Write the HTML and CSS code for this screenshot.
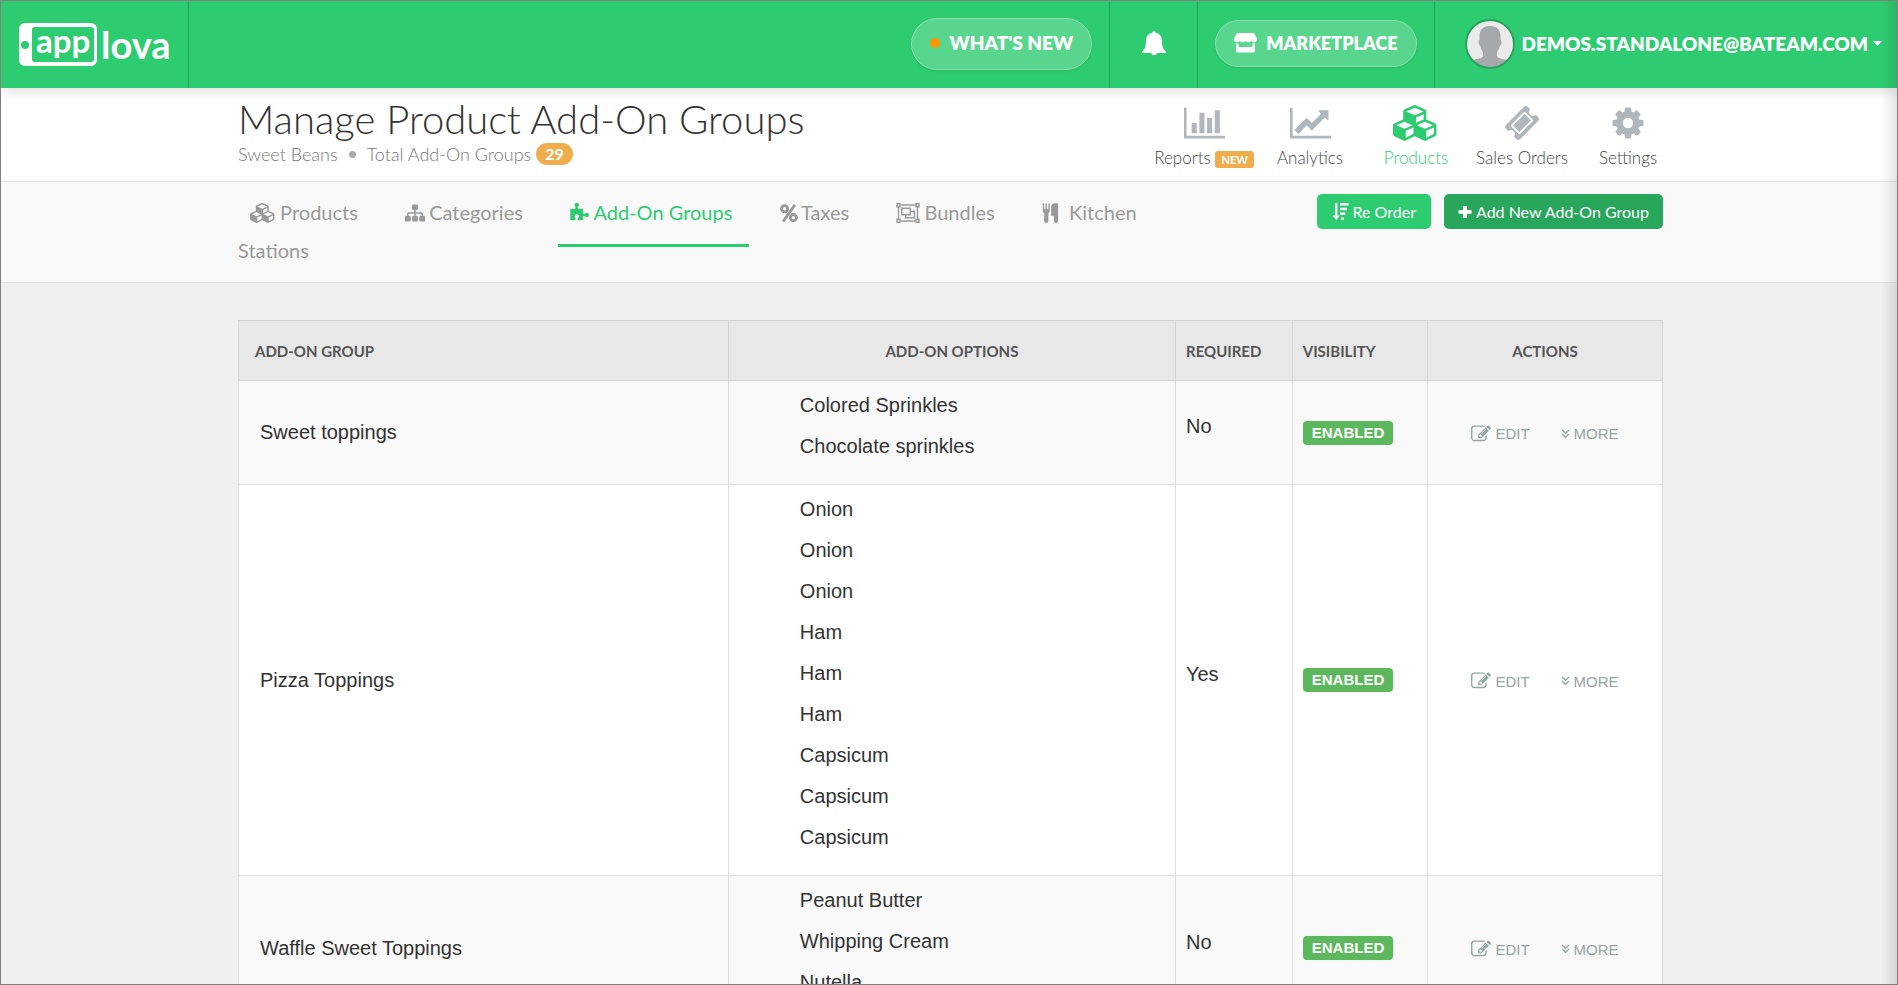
FILE: index.html
```html
<!DOCTYPE html>
<html lang="en">
<head>
<meta charset="utf-8">
<title>Manage Product Add-On Groups</title>
<link rel="stylesheet" href="styles.css">
</head>
<body>
<svg class="sprite" aria-hidden="true">
  <symbol id="i-cubes" viewBox="0 0 2304 1792"><path d="M640 1632l384-192v-314l-384 164v342zm-64-454l404-173-404-173-404 173zm1088 454l384-192v-314l-384 164v342zm-64-454l404-173-404-173-404 173zm-448-293l384-165v-266l-384 164v267zm-64-379l441-189-441-189-441 189zm1088 518v416q0 36-19 67t-52 47l-448 224q-25 14-57 14t-57-14l-448-224q-5-2-7-4-2 2-7 4l-448 224q-25 14-57 14t-57-14l-448-224q-33-16-52-47t-19-67v-416q0-38 21.500-70t56.500-48l434-186v-400q0-38 21.500-70t56.500-48l448-192q23-10 50-10t50 10l448 192q35 16 56.500 48t21.500 70v400l434 186q36 16 57 48t21 70z"/></symbol>
  <symbol id="i-edit" viewBox="0 0 1792 1792"><path d="M888 1184l116-116-152-152-116 116v56h96v96h56zm440-720q-16-16-33 1l-350 350q-17 17-1 33t33-1l350-350q17-17 1-33zm80 594v190q0 119-84.500 203.500t-203.500 84.500h-832q-119 0-203.500-84.500t-84.500-203.500v-832q0-119 84.500-203.500t203.500-84.500h832q63 0 117 25 15 7 18 23 3 17-9 29l-49 49q-14 14-32 8-23-6-45-6h-832q-66 0-113 47t-47 113v832q0 66 47 113t113 47h832q66 0 113-47t47-113v-126q0-13 9-22l64-64q15-15 35-7t20 29zm-96-738l288 288-672 672h-288v-288zm444 132l-92 92-288-288 92-92q28-28 68-28t68 28l152 152q28 28 28 68t-28 68z"/></symbol>
  <symbol id="i-down" viewBox="0 0 9 10"><path d="M1 1l3.500 3.300L8 1M1 5l3.500 3.300L8 5" fill="none" stroke="currentColor" stroke-width="1.400"/></symbol>
</svg>

<header class="topbar">
  <a class="topbar__logo" href="#" aria-label="applova">
    <svg width="156" height="46" viewBox="0 0 156 46">
      <path fill="#fff" fill-rule="evenodd" d="M6 1h66a6 6 0 0 1 6 6v31a6 6 0 0 1-6 6H6a6 6 0 0 1-6-6V7a6 6 0 0 1 6-6zM16 5a3 3 0 0 0-3 3v29a3 3 0 0 0 3 3h56a3 3 0 0 0 3-3V8a3 3 0 0 0-3-3zM6 19a4 4 0 1 0 0 8a4 4 0 0 0 0-8z"/>
      <text class="logo-text logo-text--app" x="17" y="31">app</text>
      <text class="logo-text logo-text--lova" x="82" y="37">lova</text>
    </svg>
  </a>
  <div class="topbar__cell topbar__cell--first">
    <button class="pill pill--news" type="button"><span class="pill__dot"></span>WHAT'S NEW</button>
  </div>
  <button class="topbar__cell topbar__bell" type="button" aria-label="Notifications">
    <svg width="24" height="26" viewBox="0 0 24 26"><path fill="#fff" d="M12 0c1 0 1.600.7 1.600 1.800C18 2.700 20 6 20 10c0 6 1.500 8.500 3.700 10.500.7.800.2 1.500-.7 1.500h-8a3.200 3.600 0 0 1-6 0H1c-.9 0-1.400-.7-.7-1.500C2.500 18.500 4 16 4 10c0-4 2-7.300 6.400-8.200C10.400.7 11 0 12 0z"/></svg>
  </button>
  <div class="topbar__cell">
    <button class="pill pill--market" type="button">
      <svg width="23" height="20" viewBox="0 0 23 20"><path fill="#fff" d="M4 0h15c.6 0 1 .2 1.300.7L23 5.500c.3 2-1 3.700-2.800 3.700-1.200 0-2-.5-2.900-1.500-.8 1-1.700 1.500-2.900 1.500s-2.100-.5-2.900-1.500c-.8 1-1.700 1.500-2.900 1.500s-2.100-.5-2.900-1.500c-.9 1-1.700 1.500-2.900 1.500C1 9.200-.3 7.500 0 5.500L2.700.7C3 .2 3.400 0 4 0zM2 10.300c1.200.3 1.800.2 2.500-.1V14h14v-3.800c.9.300 1.700.4 2.500.1V18.500a1 1 0 0 1-1 1H3a1 1 0 0 1-1-1z"/></svg>
      MARKETPLACE</button>
  </div>
  <button class="topbar__cell topbar__user" type="button">
    <svg width="50" height="50" viewBox="0 0 50 50"><circle cx="25" cy="25" r="24" fill="#ebebeb"/><path fill="#a5a9ac" d="M25 7c7 0 10.500 4 10.500 10v4c1.500.2 1.200 5.500-.8 6-.5 3-1.500 4.500-2.700 6v4c1 3 7 3 11.500 4.500A24 24 0 0 1 6.500 41C11 40 17 40 18 37v-4c-1.200-1.500-2.200-3-2.700-6-2-.5-2.300-5.800-.8-6v-4C14.500 11 18 7 25 7z"/><circle cx="25" cy="25" r="24" fill="none" stroke="#27a35c" stroke-width="2"/></svg>
    <span>DEMOS.STANDALONE@BATEAM.COM</span>
    <svg width="9" height="5" viewBox="0 0 9 5"><path fill="#fff" d="M0 0h9L4.500 5z"/></svg>
  </button>
</header>

<section class="pagehead">
  <div>
    <h1 class="pagehead__title">Manage Product Add-On Groups</h1>
    <p class="pagehead__sub">Sweet Beans <span class="bullet"></span> Total Add-On Groups <span class="count">29</span></p>
  </div>
  <nav class="mainnav" aria-label="Main">
    <a class="mainnav__item" href="#"><svg width="41" height="36" viewBox="0 0 2048 1792"><path d="M640 896v512h-256v-512h256zm384-512v1024h-256v-1024h256zm1024 1152v128h-2048v-1536h128v1408h1920zm-640-896v768h-256v-768h256zm384-384v1152h-256v-1152h256z"/></svg><span>Reports <span class="new">NEW</span></span></a>
    <a class="mainnav__item" href="#"><svg width="41" height="36" viewBox="0 0 2048 1792"><path d="M2048 1536v128h-2048v-1536h128v1408h1920zm-128-1248v435q0 21-19.500 29.500t-35.500-7.500l-121-121-633 633q-10 10-23 10t-23-10l-233-233-416 416-192-192 585-585q10-10 23-10t23 10l233 233 464-464-121-121q-16-16-7.500-35.500t29.500-19.500h435q14 0 23 9t9 23z"/></svg><span>Analytics</span></a>
    <a class="mainnav__item mainnav__item--active" href="#" aria-current="page"><svg width="46" height="36"><use href="#i-cubes"/></svg><span>Products</span></a>
    <a class="mainnav__item" href="#"><svg width="36" height="36" viewBox="0 0 1792 1792"><path d="M1024 452l316 316-572 572-316-316zm-211 979l618-618q19-19 19-45t-19-45l-362-362q-18-18-45-18t-45 18l-618 618q-19 19-19 45t19 45l362 362q18 18 45 18t45-18zm889-637l-907 908q-37 37-90.500 37t-90.500-37l-126-126q56-56 56-136t-56-136-136-56-136 56l-125-126q-37-37-37-90.500t37-90.500l907-906q37-37 90.500-37t90.500 37l125 125q-56 56-56 136t56 136 136 56 136-56l126 125q37 37 37 90.500t-37 90.500z"/></svg><span>Sales Orders</span></a>
    <a class="mainnav__item" href="#"><svg width="36" height="36" viewBox="0 0 1792 1792"><path d="M1152 896q0-106-75-181t-181-75-181 75-75 181 75 181 181 75 181-75 75-181zm512-109v222q0 12-8 23t-20 13l-185 28q-19 54-39 91 35 50 107 138 10 12 10 25t-9 23q-27 37-99 108t-94 71q-12 0-26-9l-138-108q-44 23-91 38-16 136-29 186-7 28-36 28h-222q-14 0-24.500-8.500t-11.500-21.500l-28-184q-49-16-90-37l-141 107q-10 9-25 9-14 0-25-11-126-114-165-168-7-10-7-23 0-12 8-23 15-21 51-66.500t54-70.500q-27-50-41-99l-183-27q-13-2-21-12.500t-8-23.500v-222q0-12 8-23t19-13l186-28q14-46 39-92-40-57-107-138-10-12-10-24 0-10 9-23 26-36 98.500-107.500t94.500-71.500q13 0 26 10l138 107q44-23 91-38 16-136 29-186 7-28 36-28h222q14 0 24.500 8.500t11.500 21.500l28 184q49 16 90 37l142-107q9-9 24-9 13 0 25 10 129 119 165 170 7 8 7 22 0 12-8 23-15 21-51 66.500t-54 70.500q26 50 41 98l183 28q13 2 21 12.500t8 23.500z"/></svg><span>Settings</span></a>
  </nav>
</section>

<section class="subnav">
  <nav class="tabs" aria-label="Products">
    <a class="tab" href="#"><svg width="26" height="20"><use href="#i-cubes"/></svg> Products</a>
    <a class="tab" href="#"><svg width="20" height="20" viewBox="0 0 1792 1792"><path d="M1792 1248v320q0 40-28 68t-68 28h-320q-40 0-68-28t-28-68v-320q0-40 28-68t68-28h96v-192h-512v192h96q40 0 68 28t28 68v320q0 40-28 68t-68 28h-320q-40 0-68-28t-28-68v-320q0-40 28-68t68-28h96v-192h-512v192h96q40 0 68 28t28 68v320q0 40-28 68t-68 28h-320q-40 0-68-28t-28-68v-320q0-40 28-68t68-28h96v-192q0-52 38-90t90-38h512v-192h-96q-40 0-68-28t-28-68v-320q0-40 28-68t68-28h320q40 0 68 28t28 68v320q0 40-28 68t-68 28h-96v192h512q52 0 90 38t38 90v192h96q40 0 68 28t28 68z"/></svg> Categories</a>
    <a class="tab tab--active" href="#" aria-current="page"><svg width="20" height="20" viewBox="64 0 1792 1792"><path d="M1755 1083q0 81-44.500 135t-123.500 54q-41 0-77.500-17.500t-59-38-56.500-38-71-17.500q-110 0-110 124 0 39 16 115t15 115v5q-22 0-33 1-34 3-97.500 11.500t-115.500 13.500-98 5q-61 0-103-26.500t-42-83.500q0-37 17.500-71t38-56.500 38-59 17.500-77.500q0-79-54-123.500t-135-44.500q-84 0-143 45.500t-59 127.500q0 43 15 83t33.500 64.500 33.500 53 15 50.500q0 45-46 89-37 35-117 35-95 0-245-24-9-2-27.500-4t-27.500-4l-13-2q-1 0-3-1-2 0-2-1v-1024q2 1 17.500 3.500t34 5 21.500 3.500q150 24 245 24 80 0 117-35 46-44 46-89 0-22-15-50.500t-33.500-53-33.500-64.500-15-83q0-82 59-127.500t144-45.500q80 0 134 44.500t54 123.500q0 41-17.500 77.500t-38 59-38 56.500-17.500 71q0 57 42 83.500t103 26.500q64 0 180-15t163-17v2q-1 2-3.500 17.500t-5 34-3.500 21.500q-24 150-24 245 0 80 35 117 44 46 89 46 22 0 50.500-15t53-33.500 64.500-33.500 83-15q82 0 127.500 59t45.500 143z"/></svg> Add-On Groups</a>
    <a class="tab" href="#"><svg width="18" height="20" viewBox="0 0 18 20"><g fill="none" stroke="currentColor" stroke-width="2.800"><circle cx="4.600" cy="5.800" r="3.100"/><circle cx="13.400" cy="14.600" r="3.100"/><path d="M14.900 1.800L3.100 18.500"/></g></svg> Taxes</a>
    <a class="tab" href="#"><svg width="24" height="20" viewBox="0 0 24 20"><g fill="none" stroke="currentColor" stroke-width="1.400"><path d="M4.500 2h15M4.500 18h15M2.500 4v12M21.500 4v12"/><path d="M1 .7h3v3H1zM20 .7h3v3h-3zM1 16.300h3v3H1zM20 16.300h3v3h-3z"/><path d="M5.700 5.200h8.600v6.600H5.700zM14.500 8.200h4v6.600H9.700v-3"/></g></svg> Bundles</a>
    <a class="tab" href="#"><svg width="18" height="20" viewBox="70 40 1500 1840"><path d="M704 128v640q0 61-35.500 111t-92.500 70v779q0 52-38 90t-90 38h-128q-52 0-90-38t-38-90v-779q-57-20-92.500-70t-35.500-111v-640q0-26 19-45t45-19 45 19 19 45v416q0 26 19 45t45 19 45-19 19-45v-416q0-26 19-45t45-19 45 19 19 45v416q0 26 19 45t45 19 45-19 19-45v-416q0-26 19-45t45-19 45 19 19 45zm768 0v1600q0 52-38 90t-90 38h-128q-52 0-90-38t-38-90v-512h-224q-13 0-22.500-9.500t-9.500-22.500v-800q0-132 94-226t226-94h256q26 0 45 19t19 45z"/></svg>&nbsp; Kitchen Stations</a>
  </nav>
  <div class="subnav__actions">
    <button class="btn" type="button"><svg width="17" height="18" viewBox="0 0 16 18"><path d="M2.500 0h2.400v12.500h2.400L3.700 17 0 12.500h2.500zM7.500 0H16v2.400H7.500zM7.500 4.800h7v2.400h-7zM7.500 9.600h5.200V12H7.500zM8.500 14.400h2.800v2.400H8.500z"/></svg>Re Order</button>
    <button class="btn btn--dark" type="button"><svg width="14" height="14" viewBox="0 0 14 14"><path d="M5 1h4v4h4.500v3.700H9V13H5V8.700H.5V5H5z"/></svg>Add New Add-On Group</button>
  </div>
</section>

<main class="content">
  <table class="groups">
    <colgroup><col class="c-group"><col class="c-options"><col class="c-req"><col class="c-vis"><col class="c-act"></colgroup>
    <thead>
      <tr><th class="th-group" scope="col">ADD-ON GROUP</th><th class="center" scope="col">ADD-ON OPTIONS</th><th scope="col">REQUIRED</th><th scope="col">VISIBILITY</th><th class="center" scope="col">ACTIONS</th></tr>
    </thead>
    <tbody>
      <tr>
        <td class="name">Sweet toppings</td>
        <td class="options"><ul><li>Colored Sprinkles</li><li>Chocolate sprinkles</li></ul></td>
        <td class="req">No</td>
        <td><span class="enabled">ENABLED</span></td>
        <td><div class="actions"><a href="#"><svg width="20" height="20"><use href="#i-edit"/></svg>EDIT</a><a href="#"><svg width="9" height="10"><use href="#i-down"/></svg>MORE</a></div></td>
      </tr>
      <tr>
        <td class="name">Pizza Toppings</td>
        <td class="options"><ul><li>Onion</li><li>Onion</li><li>Onion</li><li>Ham</li><li>Ham</li><li>Ham</li><li>Capsicum</li><li>Capsicum</li><li>Capsicum</li></ul></td>
        <td class="req">Yes</td>
        <td><span class="enabled">ENABLED</span></td>
        <td><div class="actions"><a href="#"><svg width="20" height="20"><use href="#i-edit"/></svg>EDIT</a><a href="#"><svg width="9" height="10"><use href="#i-down"/></svg>MORE</a></div></td>
      </tr>
      <tr>
        <td class="name">Waffle Sweet Toppings</td>
        <td class="options"><ul><li>Peanut Butter</li><li>Whipping Cream</li><li>Nutella</li></ul></td>
        <td class="req">No</td>
        <td><span class="enabled">ENABLED</span></td>
        <td><div class="actions"><a href="#"><svg width="20" height="20"><use href="#i-edit"/></svg>EDIT</a><a href="#"><svg width="9" height="10"><use href="#i-down"/></svg>MORE</a></div></td>
      </tr>
    </tbody>
  </table>
</main>
<div class="edge-shade"></div>
</body>
</html>
```
FILE: styles.css
```css
* { box-sizing: border-box; }
body {
  margin: 0;
  height: 100vh;
  overflow: hidden;
  position: relative;
  border: 1px solid #808080;
  background: #f0f0f0;
  font-family: Lato, "Liberation Sans", sans-serif;
  color: #333;
}
button { font-family: inherit; cursor: pointer; }
a { text-decoration: none; color: inherit; }
svg { fill: currentColor; flex: none; }
.sprite { position: absolute; width: 0; height: 0; }

/* top bar */
.topbar {
  display: flex;
  height: 87px;
  position: relative;
  background: #2ecc71;
  box-shadow: 0 2px 14px rgba(0, 0, 0, 0.15);
  color: #fff;
}
.topbar__logo {
  display: flex;
  align-items: center;
  width: 188px;
  padding-left: 18px;
  border-right: 1px solid #27a35c;
}
.logo-text { fill: #fff; font-weight: 700; }
.logo-text--app { font-size: 33px; }
.logo-text--lova { font-size: 38px; }
.topbar__cell {
  display: flex;
  align-items: center;
  padding: 0 17px 2px;
  background: none;
  border: 0;
  border-left: 1px solid #27a35c;
  color: #fff;
  font-size: 19px;
  font-weight: 800;
}
.topbar__cell--first { margin-left: auto; border-left: 0; }
.topbar__bell { width: 88px; justify-content: center; }
.topbar__user { gap: 7px; padding: 0 15px 2px 30px; }
.topbar__user > svg:last-child { margin-left: -2px; }
.pill {
  display: flex;
  align-items: center;
  justify-content: center;
  gap: 9px;
  height: 47px;
  padding: 0 18px 2px;
  border: 1px solid #8be2af;
  border-radius: 26px;
  background: #58d68d;
  box-shadow: 0 1px 3px rgba(0, 0, 0, 0.1);
  color: #fff;
  font-size: 19px;
  font-weight: 800;
}
.pill--news { height: 52px; gap: 10px; }
.pill--market { font-size: 18px; }
.pill__dot { width: 10px; height: 10px; border-radius: 50%; background: #ff9800; }

/* page heading */
.pagehead, .subnav, .content { padding: 0 234px 0 237px; }
.pagehead {
  display: flex;
  justify-content: space-between;
  height: 94px;
  background: #fff;
  border-bottom: 1px solid #e2e2e2;
}
.pagehead__title {
  margin: 8px 0 0;
  font-size: 40px;
  font-weight: 300;
  line-height: 46px;
}
.pagehead__sub {
  display: flex;
  align-items: center;
  gap: 5px;
  margin: 0;
  font-size: 18px;
  font-weight: 300;
  line-height: 24px;
  color: #777;
}
.bullet { width: 7px; height: 7px; margin: 0 6px; border-radius: 50%; background: #aaa; }
.count {
  padding: 0 9px;
  border-radius: 11px;
  background: #f0ad4e;
  color: #fff;
  font-size: 16px;
  font-weight: 700;
  line-height: 22px;
}
.mainnav { display: flex; margin-right: -18px; }
.mainnav__item {
  display: flex;
  flex-direction: column;
  align-items: center;
  width: 106px;
  padding-top: 17px;
  color: #b0b7bc;
  white-space: nowrap;
}
.mainnav__item > span {
  margin-top: 5px;
  font-size: 17px;
  font-weight: 300;
  line-height: 24px;
  color: #444;
}
.mainnav__item--active, .mainnav__item--active > span { color: #2ecc71; }
.new {
  display: inline-block;
  padding: 0 6px;
  border-radius: 3px;
  background: #f0ad4e;
  color: #fff;
  font-size: 11px;
  font-weight: 700;
  line-height: 17px;
}

/* tabs */
.subnav {
  display: flex;
  justify-content: space-between;
  align-items: flex-start;
  padding-top: 12px;
  padding-bottom: 13px;
  background: #f9f9f9;
  border-bottom: 1px solid #e2e2e2;
}
.tabs {
  width: 950px;
  margin-top: -1px;
  font-size: 20px;
  line-height: 38px;
  color: #999;
}
.tab { margin-right: 13px; padding: 0 17px 20px 12px; }
.tab svg { vertical-align: -3px; margin-right: -1px; }
.tab--active { border-bottom: 3px solid #2ecc71; color: #2ecc71; }
.subnav__actions { display: flex; gap: 13px; }
.btn {
  display: flex;
  align-items: center;
  gap: 4px;
  height: 35px;
  padding: 0 15px;
  border: 0;
  border-radius: 5px;
  background: #2ecc71;
  color: #fff;
  font-size: 16px;
  white-space: nowrap;
}
.btn--dark { padding: 0 14px; background: #27a65c; }

/* table */
.content { padding-top: 37px; }
.groups {
  width: 100%;
  table-layout: fixed;
  border-collapse: collapse;
  background: #fff;
  font-family: "Liberation Sans", Arial, sans-serif;
  font-size: 20px;
}
.c-group { width: 34.4%; }
.c-options { width: 31.4%; }
.c-req { width: 8.2%; }
.c-vis { width: 9.5%; }
.c-act { width: 16.5%; }
.groups th {
  height: 60px;
  padding: 0 10px;
  border: 1px solid #d4d4d4;
  background: #e8e8e8;
  font-family: Lato, sans-serif;
  font-size: 15px;
  font-weight: 700;
  text-align: left;
  color: #555;
}
.groups .th-group { padding-left: 16px; }
.groups .center { text-align: center; }
.groups td { padding: 0 10px; border: 1px solid #ddd; vertical-align: middle; }
.groups tbody tr:nth-child(odd) { background: #f9f9f9; }
.groups .name { padding-left: 21px; }
.groups .options { padding: 4px 0 17px 71px; }
.options ul { margin: 0; padding: 0; list-style: none; line-height: 41px; }
.groups .req { padding-bottom: 12px; }
.enabled {
  display: block;
  width: max-content;
  padding: 0 9px;
  border-radius: 4px;
  background: #5cb85c;
  color: #fff;
  font-size: 15px;
  font-weight: 700;
  line-height: 24px;
}
.actions { display: flex; justify-content: center; gap: 31px; padding-top: 2px; font-size: 15px; color: #95a5a6; }
.actions a { display: flex; align-items: center; gap: 4px; }

.edge-shade {
  position: absolute;
  top: 0;
  right: 0;
  bottom: 0;
  width: 16px;
  background: linear-gradient(to right, rgba(0, 0, 0, 0), rgba(0, 0, 0, 0.1));
  pointer-events: none;
}
```
